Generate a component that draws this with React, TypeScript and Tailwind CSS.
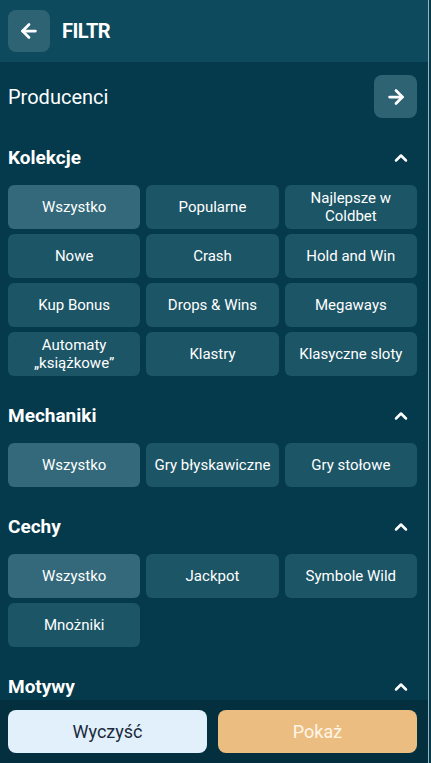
import { ArrowLeft, ArrowRight, ChevronUp } from 'lucide-react';

interface Section {
  title: string;
  options: string[];
}

const sections: Section[] = [
  {
    title: 'Kolekcje',
    options: [
      'Wszystko',
      'Popularne',
      'Najlepsze w Coldbet',
      'Nowe',
      'Crash',
      'Hold and Win',
      'Kup Bonus',
      'Drops & Wins',
      'Megaways',
      'Automaty „książkowe”',
      'Klastry',
      'Klasyczne sloty',
    ],
  },
  {
    title: 'Mechaniki',
    options: ['Wszystko', 'Gry błyskawiczne', 'Gry stołowe'],
  },
  {
    title: 'Cechy',
    options: ['Wszystko', 'Jackpot', 'Symbole Wild', 'Mnożniki'],
  },
  {
    title: 'Motywy',
    options: [],
  },
];

function FilterSection({ section }: { section: Section }) {
  return (
    <div className="pt-[28px]">
      <div className="flex h-6 items-center justify-between">
        <h2 className="text-[19px] font-bold leading-6 text-white">{section.title}</h2>
        <ChevronUp size={20} strokeWidth={3} className="mr-[6px] text-white" />
      </div>
      {section.options.length > 0 && (
        <div className="mt-[15px] grid grid-cols-3 gap-x-[6px] gap-y-[5px]">
          {section.options.map((option, index) => (
            <button
              key={option}
              className={`flex h-[44px] items-center justify-center rounded-[6px] px-1 text-center text-[15px] font-normal leading-[18px] text-white ${
                index === 0 ? 'bg-[#33697a]' : 'bg-[#1c5566]'
              }`}
            >
              {option}
            </button>
          ))}
        </div>
      )}
    </div>
  );
}

export default function App() {
  return (
    <div
      className="flex h-[763px] w-[431px] overflow-hidden bg-[#043a4c]"
      style={{ fontFamily: 'Roboto, "Noto Sans", sans-serif' }}
    >
      <div className="flex min-w-0 flex-1 flex-col">
        <header className="flex h-[62px] shrink-0 items-center gap-3 bg-[#0e4a5e] pl-2 pr-[11px]">
          <button className="flex h-[42px] w-[42px] items-center justify-center rounded-[8px] bg-[#2d6373] text-white">
            <ArrowLeft size={22} strokeWidth={3} />
          </button>
          <h1 className="text-[20px] font-bold tracking-tight text-white">FILTR</h1>
        </header>

        <div className="flex-1 overflow-hidden pl-2 pr-[11px]">
          <div className="mt-[13px] flex items-center justify-between">
            <span className="text-[20px] text-white">Producenci</span>
            <button className="flex h-[43px] w-[43px] items-center justify-center rounded-[8px] bg-[#2d6373] text-white">
              <ArrowRight size={22} strokeWidth={3} />
            </button>
          </div>

          {sections.map((section) => (
            <FilterSection key={section.title} section={section} />
          ))}
        </div>

        <footer className="flex h-[63px] shrink-0 items-center gap-[11px] bg-[#032f3e] pl-2 pr-[11px]">
          <button className="h-[43px] flex-1 rounded-[8px] bg-[#e1f0fa] text-[18px] text-[#1b2a3d]">
            Wyczyść
          </button>
          <button className="h-[43px] flex-1 rounded-[8px] bg-[#ecbd81] text-[18px] text-[#fff6e8]">
            Pokaż
          </button>
        </footer>
      </div>
      <div className="w-[3px] shrink-0 border-l border-[#9db3bd] bg-[#043a4c]" />
    </div>
  );
}
